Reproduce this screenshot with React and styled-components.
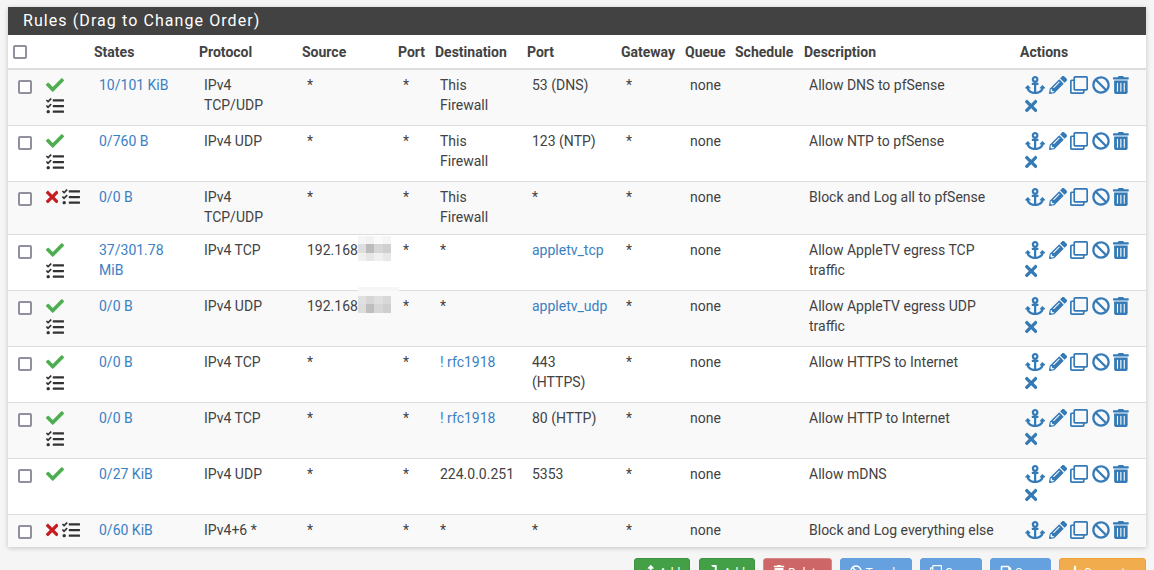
import React from 'react';
import styled, { createGlobalStyle } from 'styled-components';
import {
  FaAnchor, FaBan, FaCheck, FaLevelDownAlt, FaLevelUpAlt, FaPencilAlt, FaPlus,
  FaRegClone, FaSave, FaTasks, FaTimes, FaTrash, FaTrashAlt,
} from 'react-icons/fa';

const GlobalStyle = createGlobalStyle`
  html, body {
    margin: 0;
    height: 570px;
    overflow: hidden;
    background: #f5f5f5;
    font-family: Roboto, "Liberation Sans", sans-serif;
    font-size: 14px;
    color: #424242;
  }
`;

const Page = styled.div`
  padding: 7px 8px 0;
`;

const Panel = styled.section`
  background: #fff;
  box-shadow: 0 1px 5px rgba(0, 0, 0, 0.2);
`;

const Heading = styled.h2`
  margin: 0;
  height: 28px;
  padding: 0 15px;
  background: #424242;
  color: #fff;
  font-size: 16px;
  font-weight: 400;
  line-height: 28px;
  letter-spacing: 1.08px;
`;

const Table = styled.table`
  width: 1138px;
  table-layout: fixed;
  border-collapse: collapse;
`;

const Th = styled.th`
  height: 33px;
  padding: 0 0 0 5px;
  border-bottom: 2px solid #ddd;
  font-size: 14px;
  font-weight: 700;
  text-align: left;
  color: #424242;
`;

const Row = styled.tr`
  height: ${(p) => (p.$short ? 'auto' : '56px')};
  background: ${(p) => (p.$odd ? '#f9f9f9' : '#fff')};
  border-bottom: 1px solid #ddd;
  &:last-child {
    height: 33px;
    border-bottom: 0;
  }
`;

const Td = styled.td`
  padding: 5px 10px 7px;
  vertical-align: top;
  line-height: 20px;
  font-size: 14px;
`;

const CheckCell = styled(Td)`
  padding-top: 10px;
  padding-right: 0;
`;

const Check = styled.input.attrs({ type: 'checkbox' })`
  appearance: none;
  display: block;
  box-sizing: border-box;
  width: 14px;
  height: 14px;
  margin: 0;
  background: #fff;
  border: 2px solid #8f8f9d;
  border-radius: 2px;
`;

const IconRow = styled.div`
  display: flex;
  flex-wrap: wrap;
  align-items: center;
  column-gap: 3.5px;
  row-gap: 3px;
  margin: 1px 0 0;
  svg {
    display: block;
    flex: none;
    width: 18px;
    height: 18px;
    color: #337ab7;
  }
`;

const StatusIcons = styled(IconRow)`
  width: 36px;
`;

const Green = styled(FaCheck)`
  && {
    color: #4cae4f;
  }
`;

const Red = styled(FaTimes)`
  && {
    width: 12.4px;
    color: #c71c22;
  }
`;

const Tasks = styled(FaTasks)`
  && {
    color: #333;
  }
`;

const Anchor = styled(FaAnchor)`
  && {
    width: 20.25px;
  }
`;

const Trash = styled(FaTrashAlt)`
  && {
    width: 15.75px;
  }
`;

const Remove = styled(FaTimes)`
  && {
    width: 12.4px;
  }
`;

const Link = styled.a`
  color: #3a80c4;
  text-decoration: none;
`;

const Masked = styled.span`
  position: relative;
  display: inline-block;
`;

const Mosaic = styled.span`
  position: absolute;
  left: 100%;
  top: ${(p) => p.$top}px;
  display: grid;
  grid-template-columns: repeat(4, 8.25px);
  grid-auto-rows: ${(p) => p.$cell}px;
`;

const Tile = styled.i`
  display: block;
  background: ${(p) => p.$color};
`;

const Patch = styled.span`
  position: absolute;
  left: 100%;
  top: -9px;
  width: 41px;
  height: 4px;
  background: #f6f6f6;
`;

const Buttons = styled.div`
  display: flex;
  justify-content: flex-end;
  gap: 8.3px;
  margin-top: 11px;
`;

const Button = styled.button`
  display: flex;
  align-items: center;
  gap: 3px;
  height: 30px;
  padding: 0 9px;
  background: ${(p) => p.$bg};
  border: 1px solid ${(p) => p.$edge};
  border-radius: 3px;
  color: #fff;
  font-family: inherit;
  font-size: 12px;
  svg {
    display: block;
    height: 12px;
    width: auto;
    margin-top: -4px;
  }
`;

const columns = [28, 53, 105, 103, 96, 37, 92, 94, 64, 50, 69, 216, 131];
const heads = ['', '', 'States', 'Protocol', 'Source', 'Port', 'Destination', 'Port', 'Gateway', 'Queue', 'Schedule', 'Description', 'Actions'];

const rules = [
  { ok: true, tasks: true, states: '10/101 KiB', proto: 'IPv4 TCP/UDP', dest: 'This Firewall', port: '53 (DNS)', desc: 'Allow DNS to pfSense' },
  { ok: true, tasks: true, states: '0/760 B', proto: 'IPv4 UDP', dest: 'This Firewall', port: '123 (NTP)', desc: 'Allow NTP to pfSense' },
  { ok: false, tasks: true, states: '0/0 B', proto: 'IPv4 TCP/UDP', dest: 'This Firewall', port: '*', desc: 'Block and Log all to pfSense', fixed: true },
  { ok: true, tasks: true, states: '37/301.78 MiB', proto: 'IPv4 TCP', masked: 'a', dest: '*', port: 'appletv_tcp', portLink: true, desc: 'Allow AppleTV egress TCP traffic' },
  { ok: true, tasks: true, states: '0/0 B', proto: 'IPv4 UDP', masked: 'b', dest: '*', port: 'appletv_udp', portLink: true, desc: 'Allow AppleTV egress UDP traffic' },
  { ok: true, tasks: true, states: '0/0 B', proto: 'IPv4 TCP', dest: '! rfc1918', destLink: true, port: '443 (HTTPS)', desc: 'Allow HTTPS to Internet' },
  { ok: true, tasks: true, states: '0/0 B', proto: 'IPv4 TCP', dest: '! rfc1918', destLink: true, port: '80 (HTTP)', desc: 'Allow HTTP to Internet' },
  { ok: true, tasks: false, states: '0/27 KiB', proto: 'IPv4 UDP', dest: '224.0.0.251', port: '5353', desc: 'Allow mDNS' },
  { ok: false, tasks: true, states: '0/60 KiB', proto: 'IPv4+6 *', dest: '*', port: '*', desc: 'Block and Log everything else', fixed: true },
];

const tilesA = ['#f4f6f6', '#f1f3f3', '#fafafa', '#f5f5f5', '#dedede', '#bcbcbc', '#d6d6d6', '#cfcfcf', '#efefef', '#e6e6e6', '#f0f0f0', '#e8e8ea'];
const tilesB = ['#e0e0e0', '#d6d6d6', '#dfdfdf', '#d8d8d8', '#dcdcdc', '#bebebe', '#d6d6d6', '#cfcfcf'];

function Source({ masked }) {
  if (!masked) return '*';
  const tiles = masked === 'a' ? tilesA : tilesB;
  return (
    <Masked>
      192.168
      {masked === 'b' && <Patch />}
      <Mosaic $top={masked === 'a' ? -4 : 0} $cell={masked === 'a' ? 8.67 : 8.5}>
        {tiles.map((c, i) => <Tile key={i} $color={c} />)}
      </Mosaic>
    </Masked>
  );
}

function App() {
  return (
    <Page>
      <GlobalStyle />
      <Panel>
        <Heading>Rules (Drag to Change Order)</Heading>
        <Table>
          <colgroup>
            {columns.map((w, i) => <col key={i} style={{ width: w }} />)}
          </colgroup>
          <thead>
            <tr>
              {heads.map((h, i) => (
                <Th key={i}>{i === 0 ? <Check /> : h}</Th>
              ))}
            </tr>
          </thead>
          <tbody>
            {rules.map((r, i) => (
              <Row key={i} $odd={i % 2 === 0} $short={r.fixed}>
                <CheckCell><Check /></CheckCell>
                <Td>
                  <StatusIcons>
                    {r.ok ? <Green /> : <Red />}
                    {r.tasks && <Tasks />}
                  </StatusIcons>
                </Td>
                <Td><Link>{r.states}</Link></Td>
                <Td>{r.proto}</Td>
                <Td><Source masked={r.masked} /></Td>
                <Td>*</Td>
                <Td>{r.destLink ? <Link>{r.dest}</Link> : r.dest}</Td>
                <Td>{r.portLink ? <Link>{r.port}</Link> : r.port}</Td>
                <Td>*</Td>
                <Td>none</Td>
                <Td />
                <Td>{r.desc}</Td>
                <Td>
                  <IconRow>
                    <Anchor />
                    <FaPencilAlt />
                    <FaRegClone />
                    <FaBan />
                    <Trash />
                    {!r.fixed && <Remove />}
                  </IconRow>
                </Td>
              </Row>
            ))}
          </tbody>
        </Table>
      </Panel>
      <Buttons>
        <Button $bg="#43a047" $edge="#3d9140"><FaLevelUpAlt />Add</Button>
        <Button $bg="#43a047" $edge="#3d9140"><FaLevelDownAlt />Add</Button>
        <Button $bg="#cd6666" $edge="#d98888"><FaTrash />Delete</Button>
        <Button $bg="#65a1de" $edge="#65a1de"><FaBan />Toggle</Button>
        <Button $bg="#65a1de" $edge="#65a1de"><FaRegClone />Copy</Button>
        <Button $bg="#65a1de" $edge="#65a1de"><FaSave />Save</Button>
        <Button $bg="#f0ac4d" $edge="#eea236"><FaPlus />Separator</Button>
      </Buttons>
    </Page>
  );
}

export default App;
